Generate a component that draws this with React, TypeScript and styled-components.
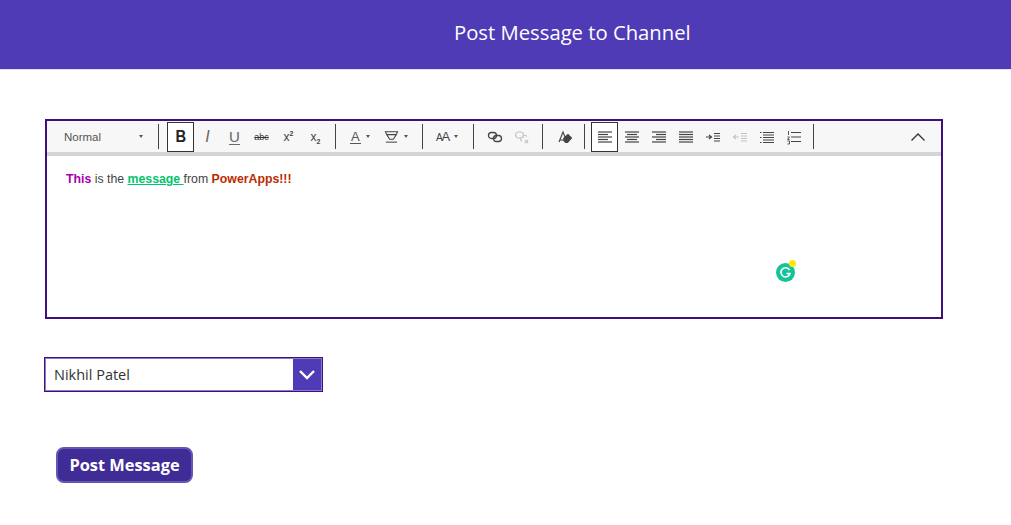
import React from "react";
import styled, { createGlobalStyle } from "styled-components";

const Global = createGlobalStyle`
  html, body { margin: 0; padding: 0; background: #fff; }
  body { font-family: "Open Sans", "Liberation Sans", sans-serif; overflow: hidden; }
`;

const Page = styled.div`
  width: 1011px;
  height: 525px;
  display: flex;
  flex-direction: column;
  overflow: hidden;
`;

const Header = styled.header`
  flex: none;
  height: 65px;
  box-sizing: content-box;
  background: #503bb7;
  border-bottom: 1px solid #e4e4ea;
  display: flex;
  align-items: center;
  padding: 0 0 4px 454px;
  color: #fff;
  font-size: 20.25px;
  line-height: 27px;
`;

const Main = styled.main`
  display: flex;
  flex-direction: column;
  align-items: flex-start;
  padding: 49px 0 0 45px;
`;

const Editor = styled.section`
  position: relative;
  width: 898px;
  height: 200px;
  box-sizing: border-box;
  border: 2px solid #3c117c;
  background: #fff;
`;

const Toolbar = styled.div`
  height: 31px;
  background: #f7f7f7;
  display: flex;
  align-items: center;
  border-bottom: 4px solid #d4d4d4;
  box-sizing: content-box;
`;

const Select = styled.div`
  width: 105px;
  height: 100%;
  box-sizing: border-box;
  padding: 0 9px 0 17px;
  display: flex;
  align-items: center;
  justify-content: space-between;
  font-family: "Liberation Sans", Arial, sans-serif;
  font-size: 11.5px;
  color: #555;
`;

const Caret = styled.span`
  width: 0;
  height: 0;
  flex: none;
  border-left: 2.5px solid transparent;
  border-right: 2.5px solid transparent;
  border-top: 3px solid #555;
`;

const Sep = styled.span<{ $tight?: boolean }>`
  width: 1px;
  height: 25px;
  flex: none;
  background: #444;
  margin: 0 ${(p) => (p.$tight ? "6px" : "8px")} 0 6px;
`;

const Btn = styled.button<{ $active?: boolean; $wide?: number; $muted?: boolean; $pad?: number }>`
  width: ${(p) => p.$wide ?? 27}px;
  height: 30px;
  flex: none;
  box-sizing: border-box;
  margin: 0;
  display: flex;
  align-items: center;
  justify-content: ${(p) => (p.$wide ? "flex-start" : "center")};
  gap: 5px;
  padding: 0 0 0 ${(p) => p.$pad ?? (p.$wide ? 5 : 0)}px;
  background: ${(p) => (p.$active ? "#fff" : "transparent")};
  border: ${(p) => (p.$active ? "1.5px solid #333" : "none")};
  color: ${(p) => (p.$muted ? "#c4c4c4" : "#444")};
  font-family: "Liberation Sans", Arial, sans-serif;
`;

const Collapse = styled(Btn)`
  margin-left: auto;
  margin-right: 10px;
`;

const Bold = styled.span`
  font-size: 16px;
  font-weight: 700;
  color: #222;
  transform: scaleX(0.92);
`;

const Italic = styled.span`
  font-size: 16px;
  font-style: italic;
  font-weight: 400;
  color: #666;
`;

const Under = styled.span`
  font-size: 15px;
  color: #666;
  text-decoration: underline;
  text-underline-offset: 2px;
`;

const Strike = styled.span`
  font-size: 9px;
  color: #333;
  text-decoration: line-through;
`;

const Script = styled.span`
  font-size: 12px;
  color: #444;
  sup, sub { font-size: 7px; line-height: 0; font-weight: 700; }
`;

const ColorA = styled.span`
  font-size: 13px;
  line-height: 13px;
  color: #555;
  border-bottom: 1px solid #555;
  padding: 0 1px;
  margin-left: 1px;
`;

const SizeA = styled.span`
  font-size: 13px;
  color: #444;
  letter-spacing: -1.2px;
  small { font-size: 10px; }
`;

const FillIcon = styled.span`
  display: flex;
  margin-left: -1px;
`;

const Body = styled.div`
  padding: 16px 19px;
  font-family: "Liberation Sans", Arial, sans-serif;
  font-size: 12.3px;
  line-height: 14px;
  color: #444;
`;

const Strong = styled.strong<{ $color: string }>`
  color: ${(p) => p.$color};
`;

const LinkText = styled.u`
  color: #00c46c;
  font-weight: 700;
`;

const Grammarly = styled.span`
  position: absolute;
  left: 729px;
  top: 142px;
  width: 19px;
  height: 19px;
  border-radius: 50%;
  background: #15c39a;
  display: flex;
  align-items: center;
  justify-content: center;
  &::after {
    content: "";
    position: absolute;
    right: -1px;
    top: -3px;
    width: 7px;
    height: 7px;
    border-radius: 50%;
    background: #ffe800;
  }
`;

const Dropdown = styled.div`
  margin: 38px 0 0 -1px;
  width: 279px;
  height: 35px;
  box-sizing: border-box;
  border: 1px solid #3c117c;
  box-shadow: inset 0 0 0 1px #8f78d0;
  padding: 1px;
  display: flex;
  align-items: stretch;
  background: #fff;
`;

const DropValue = styled.div`
  flex: 1;
  padding-left: 8px;
  display: flex;
  align-items: center;
  font-size: 14.5px;
  color: #333;
`;

const DropArrow = styled.div`
  width: 28px;
  background: #503bb7;
  display: flex;
  align-items: center;
  justify-content: center;
`;

const PostButton = styled.button`
  margin: 55px 0 0 11px;
  width: 137px;
  height: 36px;
  box-sizing: border-box;
  border: 2px solid #6655b4;
  border-radius: 8px;
  background: #3f2c96;
  color: #fff;
  font-family: "Open Sans", "Liberation Sans", sans-serif;
  font-size: 16.4px;
  font-weight: 700;
  padding: 0 0 2px;
`;

const Icon: React.FC<{ children: React.ReactNode; size?: number; sw?: number }> = ({ children, size = 16, sw = 1.1 }) => (
  <svg width={size} height={size} viewBox="0 0 16 16" fill="none" stroke="currentColor" strokeWidth={sw} aria-hidden="true">
    {children}
  </svg>
);

const Lines: React.FC<{ rows: [number, number][] }> = ({ rows }) => (
  <Icon sw={1.2}>
    {rows.map(([a, b], i) => (
      <path key={i} d={`M${a} ${3 + i * 2.5}H${b}`} />
    ))}
  </Icon>
);

export default function App() {
  return (
    <Page>
      <Global />
      <Header>Post Message to Channel</Header>
      <Main>
        <Editor>
          <Toolbar>
            <Select>
              Normal <Caret />
            </Select>
            <Sep />
            <Btn $active><Bold>B</Bold></Btn>
            <Btn><Italic>I</Italic></Btn>
            <Btn><Under>U</Under></Btn>
            <Btn><Strike>abc</Strike></Btn>
            <Btn><Script>x<sup>2</sup></Script></Btn>
            <Btn><Script>x<sub>2</sub></Script></Btn>
            <Sep />
            <Btn $wide={36}><ColorA>A</ColorA><Caret /></Btn>
            <Btn $wide={36}>
              <FillIcon>
                <Icon size={15}>
                  <path d="M1.5 3H14.5L13 6H3Z" />
                  <path d="M3 6L6 11H10L13 6" />
                  <path d="M2 14H14" />
                </Icon>
              </FillIcon>
              <Caret />
            </Btn>
            <Sep />
            <Btn $wide={36}><SizeA><small>A</small>A</SizeA><Caret /></Btn>
            <Sep />
            <Btn $wide={27} $pad={5}>
              <Icon sw={1.3}>
                <rect x="1.5" y="3.5" width="8" height="6" rx="3" />
                <rect x="6.5" y="6.5" width="8" height="6" rx="3" />
              </Icon>
            </Btn>
            <Btn $muted $wide={27} $pad={5}>
              <Icon sw={1.2}>
                <rect x="1.5" y="3" width="8" height="6" rx="3" />
                <path d="M9 6.5h2a3 3 0 0 1 2 1M8 12H7.5a3 3 0 0 1-1-3" />
                <path d="M11 11l3 3M14 11l-3 3" />
              </Icon>
            </Btn>
            <Sep />
            <Btn>
              <Icon sw={1.1}>
                <path d="M2 13L6 3L8 8" />
                <path d="M7 9L11 5.5L14.5 9L10.5 13.5H8.5L6.5 11Z" fill="currentColor" />
                <path d="M3 11H6" />
              </Icon>
            </Btn>
            <Sep $tight />
            <Btn $active $wide={27} $pad={5}>
              <Lines rows={[[1, 15], [1, 11], [1, 15], [1, 11], [1, 15]]} />
            </Btn>
            <Btn><Lines rows={[[1, 15], [3, 13], [1, 15], [3, 13], [1, 15]]} /></Btn>
            <Btn><Lines rows={[[1, 15], [5, 15], [1, 15], [5, 15], [1, 15]]} /></Btn>
            <Btn><Lines rows={[[1, 15], [1, 15], [1, 15], [1, 15], [1, 15]]} /></Btn>
            <Btn>
              <Icon sw={1.2}>
                <path d="M1 8H6M4 6L6.5 8L4 10" />
                <path d="M9 4.5H15M9 7H15M9 9.5H15M9 12H15" />
              </Icon>
            </Btn>
            <Btn $muted>
              <Icon sw={1.2}>
                <path d="M2 8H7M4 6L1.5 8L4 10" />
                <path d="M9 4.5H15M9 7H15M9 9.5H15M9 12H15" />
              </Icon>
            </Btn>
            <Btn>
              <Icon sw={1.2}>
                <path d="M4 3.5H15M4 6H15M4 8.5H15M4 11H15M4 13.5H15" />
                <path d="M1 3.5H2.5M1 8.5H2.5M1 13.5H2.5" />
              </Icon>
            </Btn>
            <Btn>
              <Icon sw={1.2}>
                <path d="M5 3.5H15M5 8H15M5 12.5H15" />
                <path d="M2.5 2V6M1.5 8H3.5L1.5 10.5H3.5M1.5 12H3.5V15H1.5" strokeWidth="0.9" />
              </Icon>
            </Btn>
            <Sep />
            <Collapse>
              <svg width="16" height="10" viewBox="0 0 16 10" fill="none" stroke="#333" strokeWidth="1.3" aria-hidden="true">
                <path d="M1.5 8.5L8 2L14.5 8.5" />
              </svg>
            </Collapse>
          </Toolbar>
          <Body>
            <Strong $color="#a800ad">This</Strong> is the <LinkText>message </LinkText>from{" "}
            <Strong $color="#bb2c00">PowerApps!!!</Strong>
          </Body>
          <Grammarly>
            <svg width="13" height="13" viewBox="0 0 13 13" fill="none" stroke="#fff" strokeWidth="1.6" aria-hidden="true">
              <path d="M10.5 4A4.6 4.6 0 1 0 11 7.5H7.5" />
            </svg>
          </Grammarly>
        </Editor>
        <Dropdown>
          <DropValue>Nikhil Patel</DropValue>
          <DropArrow>
            <svg width="18" height="11" viewBox="0 0 18 11" fill="none" stroke="#fff" strokeWidth="2.4" aria-hidden="true">
              <path d="M2 2L9 9L16 2" />
            </svg>
          </DropArrow>
        </Dropdown>
        <PostButton>Post Message</PostButton>
      </Main>
    </Page>
  );
}
